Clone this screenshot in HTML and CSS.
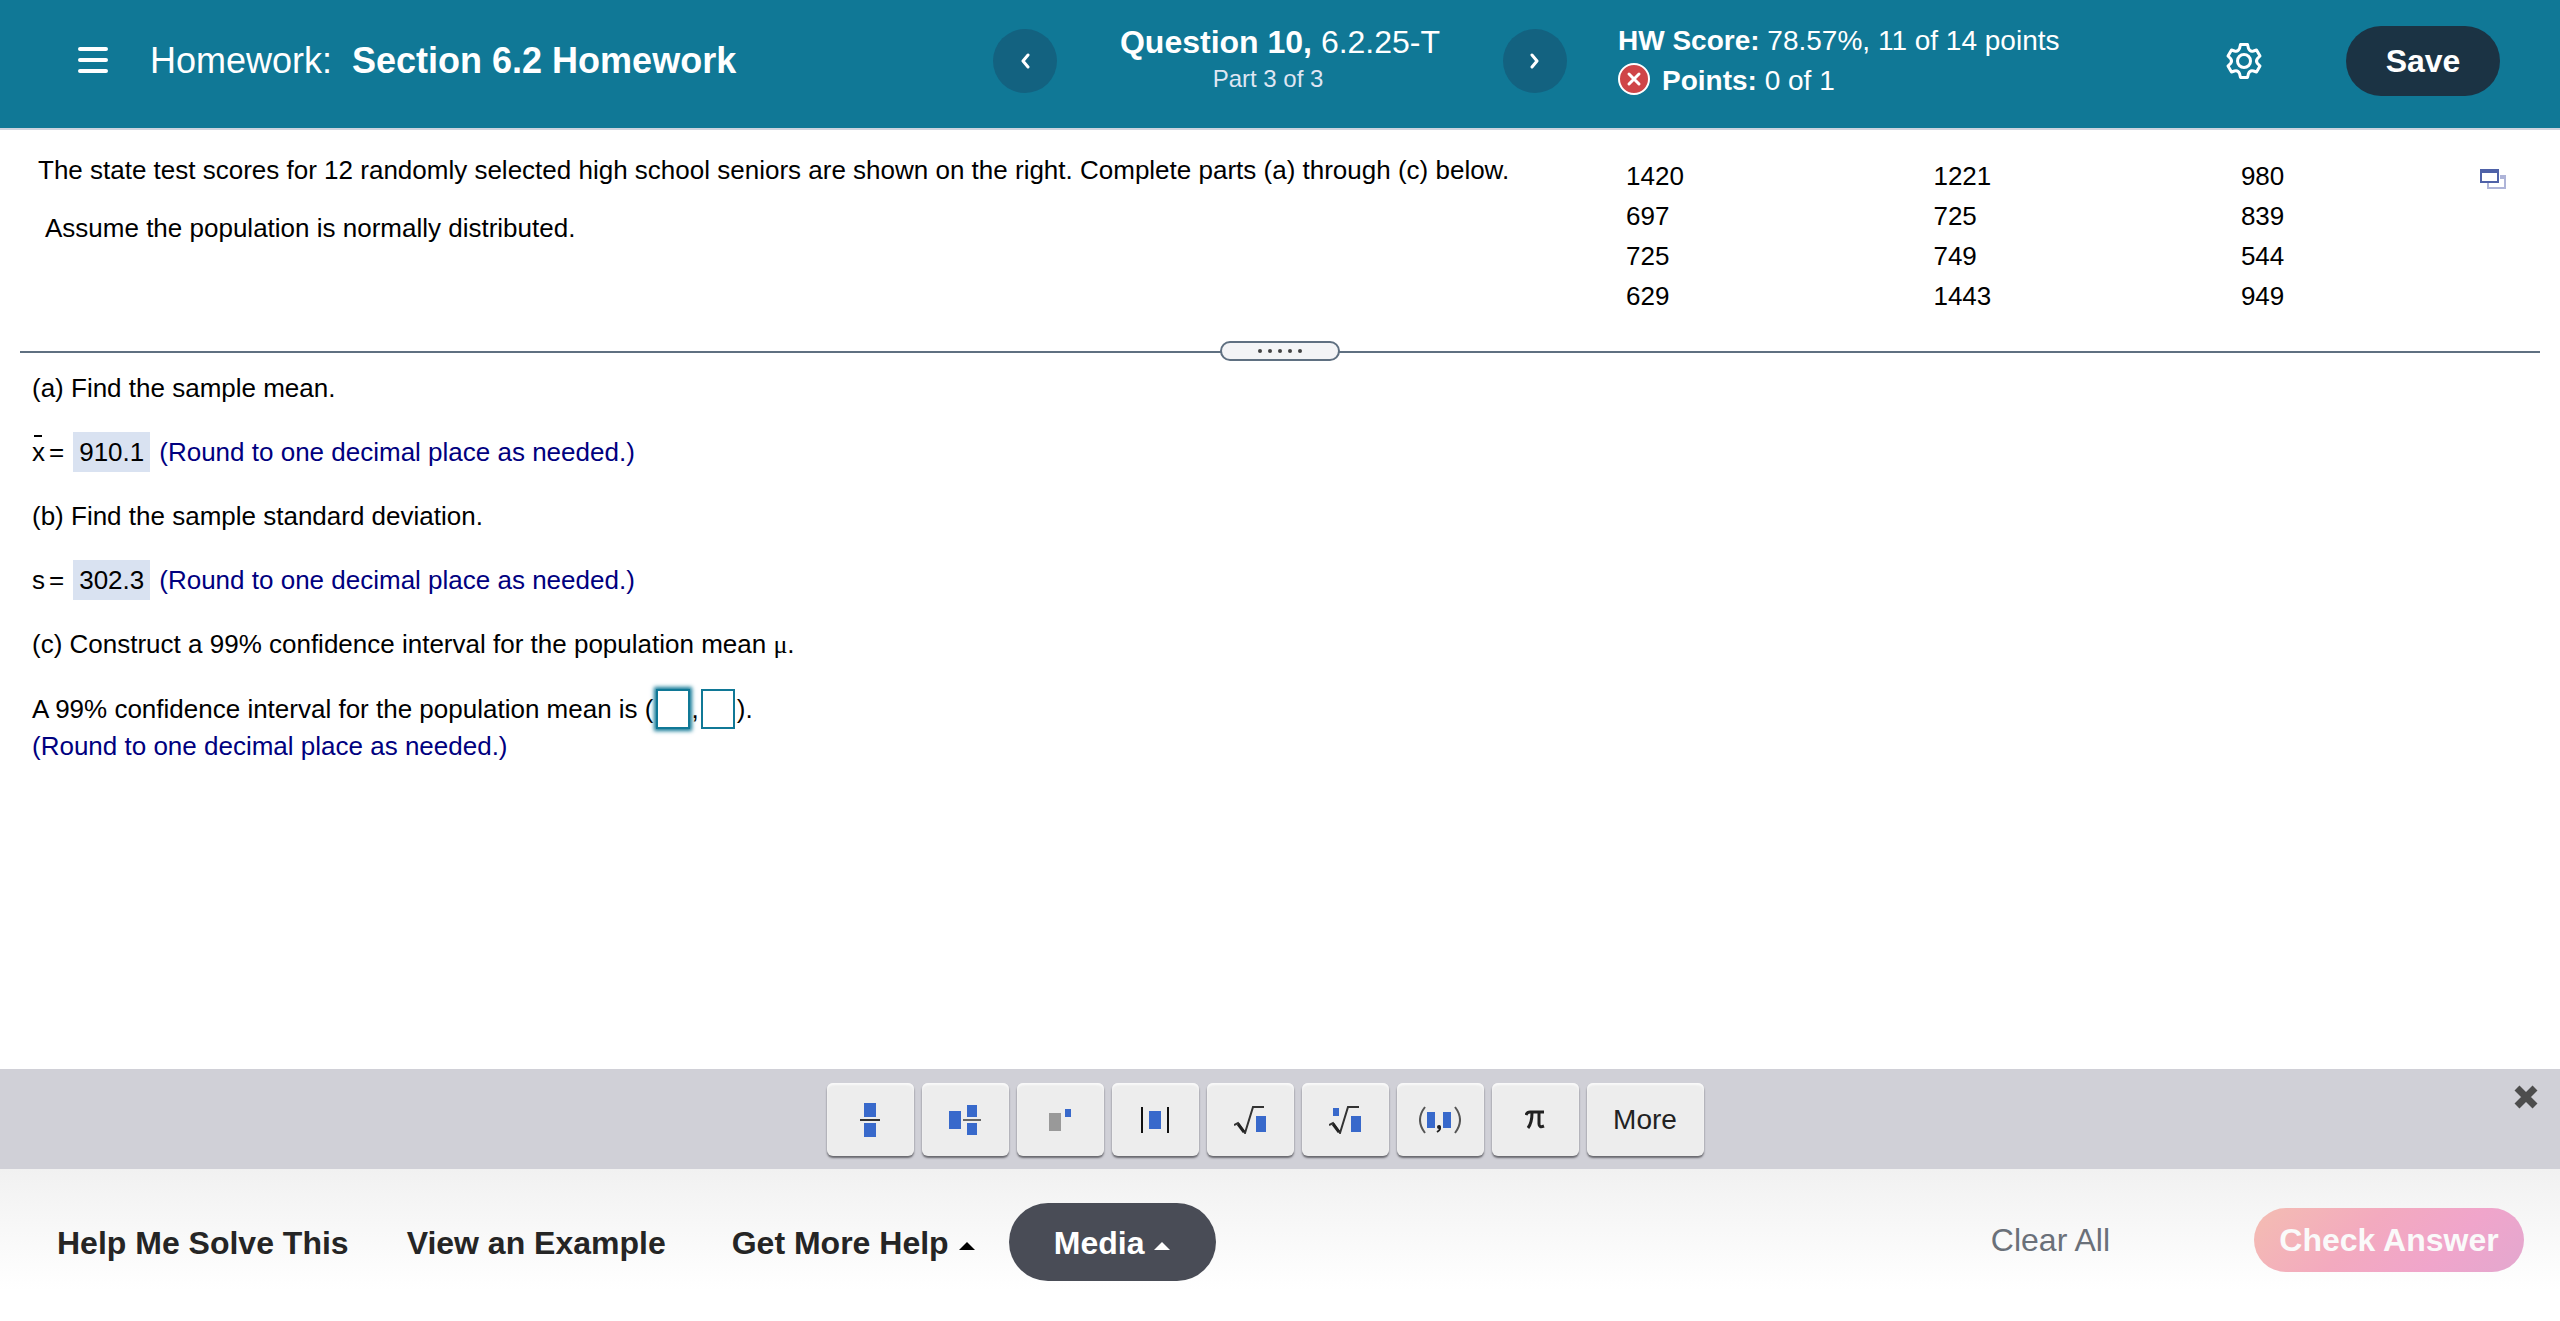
FILE: index.html
```html
<!DOCTYPE html>
<html lang="en">
<head>
<meta charset="utf-8">
<title>Section 6.2 Homework</title>
<link rel="stylesheet" href="styles.css">
</head>
<body>
<header class="topbar">
  <div class="course">
    <button class="icon-button" type="button" aria-label="Menu">
      <svg width="30" height="28" viewBox="0 0 30 28" stroke="#fff" stroke-width="4" stroke-linecap="round"><path d="M2 2H28M2 13H28M2 24H28"/></svg>
    </button>
    <h1 class="course-title">Homework: <strong>Section 6.2 Homework</strong></h1>
  </div>
  <nav class="question-nav" aria-label="Questions">
    <button class="round-button" type="button" aria-label="Previous question">
      <svg width="10" height="16" viewBox="0 0 10 16" fill="none" stroke="#fff" stroke-width="3" stroke-linecap="round" stroke-linejoin="round"><path d="M8 2L3 8L8 14"/></svg>
    </button>
    <div class="question">
      <div class="question-title"><strong>Question 10,</strong> 6.2.25-T</div>
      <div class="question-part">Part 3 of 3</div>
    </div>
    <button class="round-button" type="button" aria-label="Next question">
      <svg width="10" height="16" viewBox="0 0 10 16" fill="none" stroke="#fff" stroke-width="3" stroke-linecap="round" stroke-linejoin="round"><path d="M2 2L7 8L2 14"/></svg>
    </button>
  </nav>
  <div class="status">
    <div class="score">
      <div><strong>HW Score:</strong> 78.57%, 11 of 14 points</div>
      <div class="points">
        <svg width="32" height="36" viewBox="0 -3 32 36"><circle cx="16" cy="15" r="15" fill="#cf4548" stroke="#fff" stroke-width="2"/><path d="M11 10L21 20M21 10L11 20" stroke="#fff" stroke-width="3" stroke-linecap="round"/></svg>
        <span><strong>Points:</strong> 0 of 1</span>
      </div>
    </div>
    <button class="icon-button gear" type="button" aria-label="Settings">
      <svg width="36" height="38" viewBox="0 0 36 38" fill="none" stroke="#fff" stroke-width="3" stroke-linejoin="round"><path d="M14.500 2.500H21.500L22.500 6.500Q24 10 27.500 9L30.500 8L34 14L31.500 16.500Q29.500 19 31.500 21.500L34 24L30.500 30L27.500 29Q24 28 22.500 31.500L21.500 35.500H14.500L13.500 31.500Q12 28 8.500 29L5.500 30L2 24L4.500 21.500Q6.500 19 4.500 16.500L2 14L5.500 8L8.500 9Q12 10 13.500 6.500Z"/><circle cx="18" cy="19" r="6.500"/></svg>
    </button>
    <button class="save" type="button">Save</button>
  </div>
</header>

<main class="exercise">
  <section class="problem">
    <div class="statement">
      <p>The state test scores for 12 randomly selected high school seniors are shown on the right. Complete parts (a) through (c) below.</p>
      <p class="assumption">Assume the population is normally distributed.</p>
    </div>
    <table class="scores">
      <tr><td>1420</td><td>1221</td><td>980</td></tr>
      <tr><td>697</td><td>725</td><td>839</td></tr>
      <tr><td>725</td><td>749</td><td>544</td></tr>
      <tr><td>629</td><td>1443</td><td>949</td></tr>
    </table>
    <button class="icon-button popout" type="button" aria-label="Open data">
      <svg width="26" height="20" viewBox="0 0 26 20"><path fill="#aeb4d8" d="M20 6H26V20H7V14H9V18H24V10H20Z"/><path fill="#4f62a8" fill-rule="evenodd" d="M0 0H19V14H0ZM2 4V12H17V4Z"/></svg>
    </button>
  </section>
  <div class="divider"><button class="handle" type="button" aria-label="Resize panels"><i></i><i></i><i></i><i></i><i></i></button></div>
  <section class="parts">
    <p>(a) Find the sample mean.</p>
    <p class="result"><span class="symbol"><span class="mean">x</span><span>=</span></span><span class="value">910.1</span><span class="hint">(Round to one decimal place as needed.)</span></p>
    <p>(b) Find the sample standard deviation.</p>
    <p class="result"><span class="symbol"><span>s</span><span>=</span></span><span class="value">302.3</span><span class="hint">(Round to one decimal place as needed.)</span></p>
    <p>(c) Construct a 99% confidence interval for the population mean <span class="mu">μ</span>.</p>
    <div>
      <p class="interval"><span>A 99% confidence interval for the population mean is (</span><input class="blank active" type="text" aria-label="Lower bound"><span>,</span><input class="blank" type="text" aria-label="Upper bound"><span>).</span></p>
      <p class="hint note">(Round to one decimal place as needed.)</p>
    </div>
  </section>
</main>

<div class="palette">
  <div class="keys">
    <button class="key" type="button" aria-label="Fraction"><svg width="20" height="34" viewBox="0 0 20 34"><path fill="#3869cb" d="M4 0H16V14H4ZM4 20H16V34H4Z"/><path fill="#333" d="M0 16H20V18H0Z"/></svg></button>
    <button class="key" type="button" aria-label="Mixed number"><svg width="32" height="30" viewBox="0 0 32 30"><path fill="#3869cb" d="M0 6H12V24H0ZM18 0H28V12H18ZM18 18H28V30H18Z"/><path fill="#666" d="M14 14H32V16H14Z"/></svg></button>
    <button class="key" type="button" aria-label="Exponent"><svg width="22" height="22" viewBox="0 0 22 22"><path fill="#999" d="M0 4H12V22H0Z"/><path fill="#3869cb" d="M16 0H22V8H16Z"/></svg></button>
    <button class="key" type="button" aria-label="Absolute value"><svg width="28" height="26" viewBox="0 0 28 26"><path fill="#111" d="M0 0H2V26H0ZM26 0H28V26H26Z"/><path fill="#3869cb" d="M8 4H20V22H8Z"/></svg></button>
    <button class="key" type="button" aria-label="Square root"><svg width="32" height="28" viewBox="0 0 32 28"><path fill="none" stroke="#333" stroke-width="2" d="M0 19L4 17L11 27L19 1H30"/><path stroke="#222" stroke-width="3" d="M4 18L10 26"/><path fill="#3869cb" d="M22 10H32V26H22Z"/></svg></button>
    <button class="key" type="button" aria-label="Nth root"><svg width="32" height="28" viewBox="0 0 32 28"><path fill="none" stroke="#333" stroke-width="2" d="M0 19L4 17L11 27L19 1H30"/><path stroke="#222" stroke-width="3" d="M4 18L10 26"/><path fill="#3869cb" d="M22 10H32V26H22ZM4 2H10V10H4Z"/></svg></button>
    <button class="key" type="button" aria-label="Ordered pair"><svg width="42" height="28" viewBox="0 0 42 28"><path fill="none" stroke="#555" stroke-width="2" d="M6 1Q-4 14 6 27M36 1Q46 14 36 27"/><path fill="#3869cb" d="M8 6H16V22H8ZM24 6H32V22H24Z"/><path fill="none" stroke="#222" stroke-width="2" d="M20 20Q23 23 18 26"/><circle cx="20" cy="21" r="2" fill="#222"/></svg></button>
    <button class="key" type="button" aria-label="Pi"><svg width="20" height="20" viewBox="0 0 20 20"><path fill="none" stroke="#222" stroke-width="3" d="M1 5Q2 2 5 2H19M7 3Q7 13 3 18M14 3V14Q14 18 19 16"/></svg></button>
    <button class="key more" type="button">More</button>
  </div>
  <button class="icon-button close" type="button" aria-label="Close">
    <svg width="24" height="24" viewBox="0 0 24 24"><path d="M3 3L21 21M21 3L3 21" stroke="#4d4d4d" stroke-width="7"/></svg>
  </button>
</div>

<footer class="actions">
  <div class="help">
    <button class="text-button" type="button">Help Me Solve This</button>
    <button class="text-button" type="button">View an Example</button>
    <button class="text-button" type="button">Get More Help<svg class="caret" width="16" height="8" viewBox="0 0 16 8"><path fill="#000" d="M8 0L16 8H0Z"/></svg></button>
  </div>
  <button class="media" type="button">Media<svg class="caret" width="16" height="8" viewBox="0 0 16 8"><path fill="#fff" d="M8 0L16 8H0Z"/></svg></button>
  <div class="submit">
    <button class="clear" type="button">Clear All</button>
    <button class="check" type="button">Check Answer</button>
  </div>
</footer>
</body>
</html>
```
FILE: styles.css
```css
* { box-sizing: border-box; }

body {
  margin: 0;
  min-height: 100vh;
  display: flex;
  flex-direction: column;
  background: #fff;
  color: #000;
  font: 26px/30px "Liberation Sans", Arial, sans-serif;
}

p, h1 { margin: 0; }

svg { display: block; flex: none; }

button {
  margin: 0;
  padding: 0;
  border: 0;
  background: none;
  color: inherit;
  font: inherit;
  cursor: pointer;
}

/* Header */
.topbar {
  display: grid;
  grid-template-columns: 1fr 574px 1fr;
  align-items: center;
  height: 130px;
  padding-bottom: 6px;
  border-bottom: 2px solid #cdd3de;
  background: #107896;
  color: #fff;
}

.course {
  display: flex;
  align-items: center;
  gap: 42px;
  padding-left: 78px;
}

.course-title {
  font-size: 36px;
  line-height: 42px;
  font-weight: 400;
}

.course-title strong { margin-left: 10px; }

.question-nav {
  display: flex;
  align-items: center;
  justify-content: space-between;
}

.round-button {
  display: grid;
  place-items: center;
  width: 64px;
  height: 64px;
  border-radius: 50%;
  background: #136280;
}

.question { padding-bottom: 5px; }

.question-title {
  font-size: 32px;
  line-height: 36px;
}

.question-part {
  margin-top: 5px;
  padding-right: 24px;
  color: #dfe6f3;
  font-size: 24px;
  line-height: 28px;
  text-align: center;
}

.status {
  display: flex;
  align-items: center;
  padding: 0 60px 0 51px;
}

.score {
  font-size: 28px;
  line-height: 40px;
}

.points {
  display: flex;
  align-items: flex-start;
  gap: 12px;
}

.gear { margin-left: auto; }

.save {
  width: 154px;
  height: 70px;
  margin-left: 84px;
  border-radius: 35px;
  background: #1b3344;
  font-size: 32px;
  font-weight: 700;
}

/* Problem statement */
.exercise { flex: 1; }

.problem {
  display: grid;
  grid-template-columns: 1588fr 854fr 26px;
  align-items: start;
  padding: 25px 54px 25px 38px;
}

.assumption {
  margin-top: 28px;
  padding-left: 7px;
}

.scores {
  width: 100%;
  margin-top: 1px;
  border-collapse: collapse;
  table-layout: fixed;
}

.scores td {
  width: 36%;
  height: 40px;
  padding: 0;
}

.scores td:last-child { width: 28%; }

.popout { margin-top: 14px; }

.divider {
  display: flex;
  justify-content: center;
  margin: 0 20px;
  background: linear-gradient(#5f7081, #5f7081) 0 10px / 100% 2px no-repeat;
}

.handle {
  display: flex;
  align-items: center;
  justify-content: center;
  gap: 6px;
  width: 120px;
  height: 20px;
  border: 2px solid #5f7081;
  border-radius: 10px;
  background: #f3f4f6;
}

.handle i {
  width: 4px;
  height: 4px;
  border-radius: 50%;
  background: #444;
}

/* Parts */
.parts {
  display: flex;
  flex-direction: column;
  gap: 24px;
  padding: 7px 32px;
  line-height: 40px;
}

.result {
  display: flex;
  gap: 9px;
}

.symbol {
  display: flex;
  gap: 4px;
}

.mean { position: relative; }

.mean::before {
  content: "";
  position: absolute;
  top: 3px;
  left: 2px;
  width: 8px;
  height: 2px;
  background: #000;
}

.value {
  padding: 0 6px;
  background: #d9e2f1;
}

.hint { color: #00007f; }

.note { line-height: 34px; }

.mu { font-family: "Liberation Serif", serif; }

.interval {
  display: flex;
  align-items: center;
  gap: 2px;
}

.blank {
  width: 34px;
  height: 40px;
  padding: 0 4px;
  border: 2px solid #107896;
  background: #fff;
  font: inherit;
  outline: 0;
}

.active { box-shadow: 0 0 4px 2px #107896; }

/* Math palette */
.palette {
  display: grid;
  grid-template-columns: 1fr auto 1fr;
  align-items: start;
  height: 100px;
  padding: 14px 22px 0;
  background: #d0d0d7;
}

.keys {
  display: flex;
  grid-column: 2;
  gap: 8px;
  margin-right: 30px;
}

.key {
  display: grid;
  place-items: center;
  width: 87px;
  height: 73px;
  border-radius: 6px;
  background: #ededed;
  box-shadow: inset 0 2px 2px #fafafa, 0 2px 2px #68686e;
}

.more {
  width: 117px;
  color: #222;
  font-size: 28px;
}

.close {
  justify-self: end;
  margin-top: 2px;
}

/* Footer */
.actions {
  display: flex;
  align-items: center;
  height: 152px;
  padding: 0 36px 6px 57px;
  background: linear-gradient(#f1f1f1, #fff 80%);
  color: #252525;
  font-size: 32px;
  font-weight: 700;
}

.help {
  display: flex;
  gap: 58px;
  padding-top: 2px;
}

.text-button {
  display: flex;
  align-items: center;
}

.text-button:last-child { margin-left: 8px; }

.caret { margin: 6px 0 0 10px; }

.media {
  display: flex;
  align-items: center;
  justify-content: center;
  width: 207px;
  height: 78px;
  margin-left: 34px;
  padding-top: 2px;
  border-radius: 39px;
  background: #494c56;
  color: #fff;
}

.submit {
  display: flex;
  align-items: center;
  gap: 144px;
  margin-left: auto;
  padding-bottom: 4px;
}

.clear {
  color: #6a7079;
  font-weight: 400;
}

.check {
  width: 270px;
  height: 64px;
  border-radius: 32px;
  background: linear-gradient(135deg, #f4bdb2, #f3aabf 40%, #f0a5cb 70%, #e3a8cf);
  color: #fafafa;
}
```
